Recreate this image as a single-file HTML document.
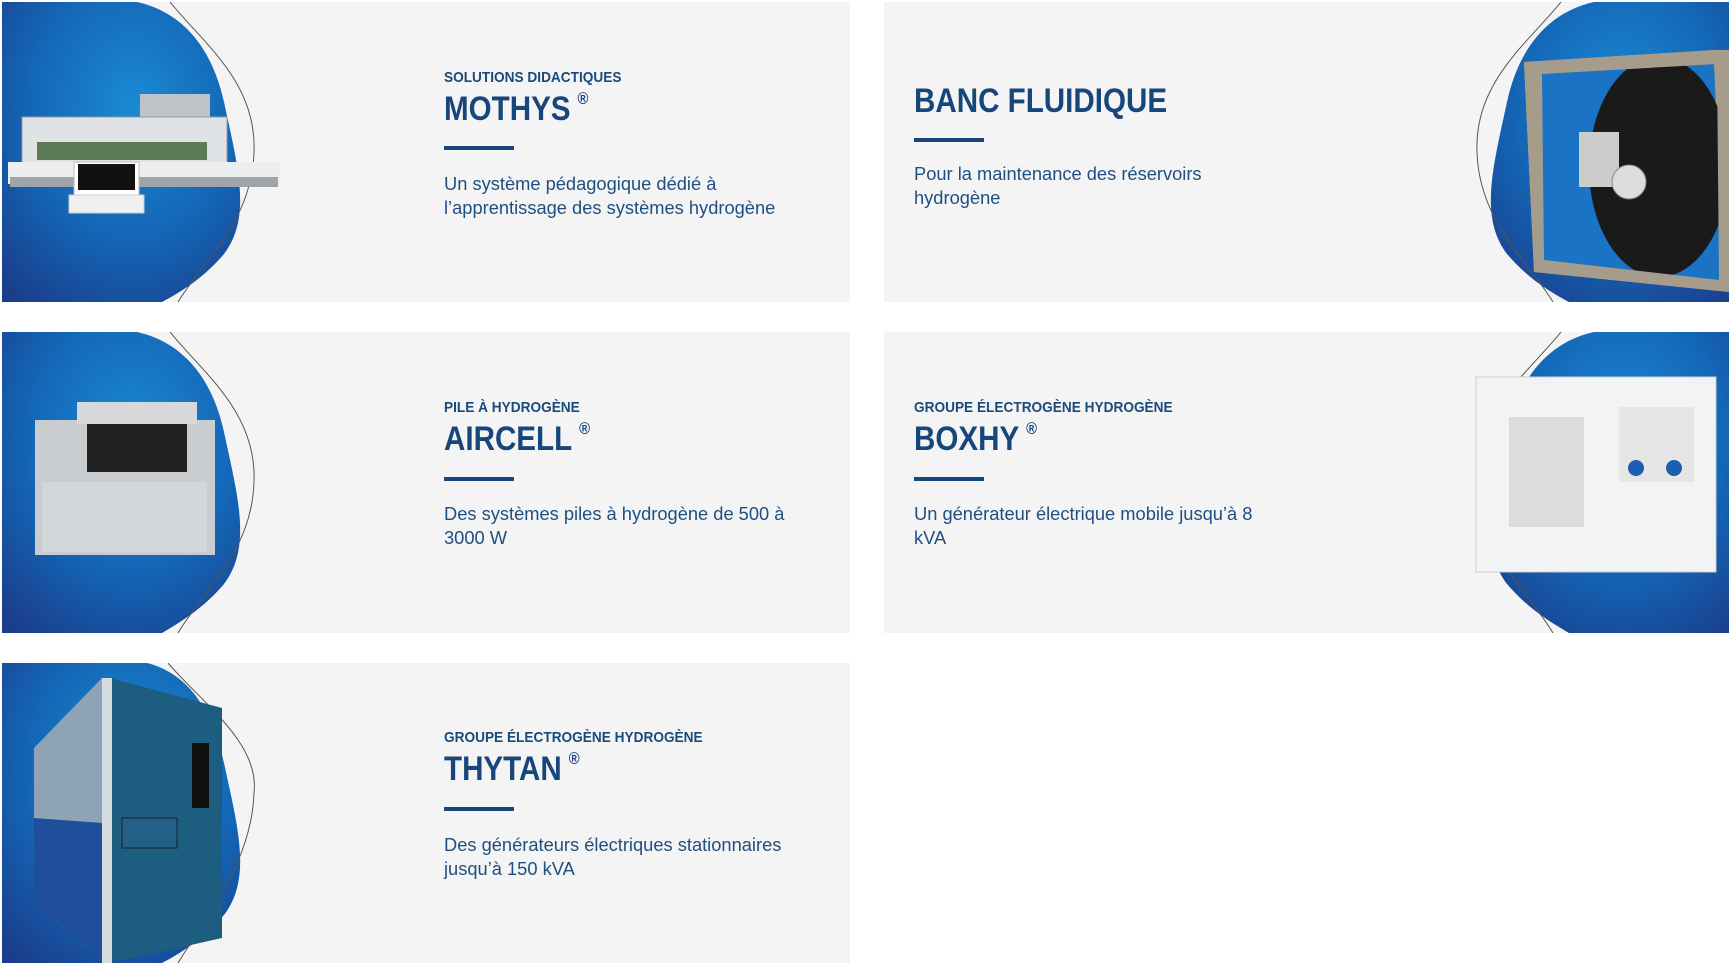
<!DOCTYPE html>
<html><head><meta charset="utf-8"><style>
*{margin:0;padding:0;box-sizing:border-box}
body{width:1729px;height:958px;background:#fff;position:relative;overflow:hidden;font-family:"Liberation Sans",sans-serif;color:#1a4a7c}
.card{position:absolute;background:#f4f4f4;overflow:hidden}
.card svg{position:absolute;left:0;top:0}
.t{position:absolute;white-space:nowrap}
.lab{font-weight:bold;font-size:15px;color:#1a4a7c;line-height:1;transform:scaleX(0.91);transform-origin:left}
.ttl{font-weight:bold;font-size:34px;color:#17467a;line-height:1;transform:scaleX(0.87);transform-origin:left}
.ttl sup{font-size:17px;vertical-align:top;position:relative;top:-2px;margin-left:8px}
.bar{width:70px;height:4px;background:#17467a}
.body{line-height:24px;color:#1f4f80;font-size:18.3px}
</style></head><body>
<svg width="0" height="0" style="position:absolute"><defs>
<radialGradient id="g" cx="0.55" cy="0.35" r="0.8"><stop offset="0" stop-color="#1a8ad4"/><stop offset="0.55" stop-color="#1466b6"/><stop offset="1" stop-color="#1a3e8c"/></radialGradient>
</defs></svg>

<div class="card" style="left:2px;top:2px;width:848px;height:300px">
<svg width="848" height="300"><path d="M0,0 L135,0 C180,10 210,45 222,100 C236,165 250,215 222,252 C200,278 175,292 160,300 L0,300 Z" fill="url(#g)"/>
<path d="M168,0 C200,40 255,80 252,150 C250,220 200,260 176,300" stroke="#555" stroke-width="1" fill="none"/>
<rect x="138" y="92" width="70" height="28" fill="#bfc3c6"/><rect x="20" y="115" width="205" height="50" fill="#dfe3e6" stroke="#999"/>
<rect x="35" y="140" width="170" height="18" fill="#5a7a58"/>
<rect x="6" y="160" width="272" height="22" fill="#eceeef"/><rect x="8" y="175" width="268" height="10" fill="#9ea4a8"/>
<rect x="72" y="160" width="65" height="33" fill="#fff" stroke="#bbb"/><rect x="76" y="162" width="57" height="26" fill="#111"/>
<rect x="67" y="193" width="75" height="18" fill="#f0f0f0" stroke="#ccc"/></svg>
<div class="t lab" style="left:442px;top:68px">SOLUTIONS DIDACTIQUES</div>
<div class="t ttl" style="left:442px;top:90px">MOTHYS<sup>®</sup></div>
<div class="t bar" style="left:442px;top:144px"></div>
<div class="t body" style="left:442px;top:170px">Un système pédagogique dédié à<br>l’apprentissage des systèmes hydrogène</div>
</div>

<div class="card" style="left:884px;top:2px;width:845px;height:300px">
<svg width="845" height="300"><path d="M845,0 L710,0 C665,10 635,45 623,100 C609,165 595,215 623,252 C645,278 670,292 685,300 L845,300 Z" fill="url(#g)"/>
<path d="M677,0 C645,40 590,80 593,150 C595,220 645,260 669,300" stroke="#555" stroke-width="1" fill="none"/>
<path d="M640,60 L830,48 L845,48 L845,290 L650,270 Z" fill="#a59c8c"/>
<path d="M655,72 L830,62 L840,280 L660,258 Z" fill="#1a73c4"/>
<ellipse cx="775" cy="165" rx="70" ry="110" fill="#1a1a1a"/>
<rect x="695" y="130" width="40" height="55" fill="#ccc"/><circle cx="745" cy="180" r="17" fill="#ddd" stroke="#888"/>
<path d="M640,60 L830,48 L845,48 L845,290 L650,270 Z M658,72 L660,258 L835,278 L833,62 Z" fill="#a59c8c" fill-rule="evenodd"/></svg>
<div class="t ttl" style="left:30px;top:82px">BANC FLUIDIQUE</div>
<div class="t bar" style="left:30px;top:136px"></div>
<div class="t body" style="left:30px;top:160px">Pour la maintenance des réservoirs<br>hydrogène</div>
</div>

<div class="card" style="left:2px;top:332px;width:848px;height:301px">
<svg width="848" height="301"><path d="M0,0 L135,0 C180,10 210,45 222,100 C236,165 250,215 222,252 C200,278 175,292 160,301 L0,301 Z" fill="url(#g)"/>
<path d="M168,0 C200,40 255,80 252,150 C250,220 200,260 176,301" stroke="#555" stroke-width="1" fill="none"/>
<rect x="33" y="88" width="180" height="135" fill="#c9cdd0"/><rect x="75" y="70" width="120" height="22" fill="#d8d8d8"/>
<rect x="85" y="92" width="100" height="48" fill="#222"/><rect x="40" y="150" width="165" height="70" fill="#d4d7da"/></svg>
<div class="t lab" style="left:442px;top:68px">PILE À HYDROGÈNE</div>
<div class="t ttl" style="left:442px;top:90px">AIRCELL<sup>®</sup></div>
<div class="t bar" style="left:442px;top:145px"></div>
<div class="t body" style="left:442px;top:170px">Des systèmes piles à hydrogène de 500 à<br>3000 W</div>
</div>

<div class="card" style="left:884px;top:332px;width:845px;height:301px">
<svg width="845" height="301"><path d="M845,0 L710,0 C665,10 635,45 623,100 C609,165 595,215 623,252 C645,278 670,292 685,301 L845,301 Z" fill="url(#g)"/>
<path d="M677,0 C645,40 590,80 593,150 C595,220 645,260 669,301" stroke="#555" stroke-width="1" fill="none"/>
<rect x="592" y="45" width="240" height="195" fill="#f2f3f4" stroke="#ccc"/>
<rect x="625" y="85" width="75" height="110" fill="#dcdcdc"/><rect x="735" y="75" width="75" height="75" fill="#e6e6e6"/>
<circle cx="752" cy="136" r="8" fill="#1a5fb0"/><circle cx="790" cy="136" r="8" fill="#1a5fb0"/></svg>
<div class="t lab" style="left:30px;top:68px">GROUPE ÉLECTROGÈNE HYDROGÈNE</div>
<div class="t ttl" style="left:30px;top:90px">BOXHY<sup>®</sup></div>
<div class="t bar" style="left:30px;top:145px"></div>
<div class="t body" style="left:30px;top:170px">Un générateur électrique mobile jusqu’à 8<br>kVA</div>
</div>

<div class="card" style="left:2px;top:663px;width:848px;height:300px">
<svg width="848" height="300"><path d="M0,0 L145,0 C185,10 210,45 222,100 C236,165 250,215 222,252 C200,278 175,292 160,300 L0,300 Z" fill="url(#g)"/>
<path d="M166,0 C200,40 258,80 252,130 C250,200 200,260 176,300" stroke="#555" stroke-width="1" fill="none"/>
<path d="M32,85 L100,15 L100,295 L32,240 Z" fill="#8fa3b6"/><path d="M32,155 L100,160 L100,295 L32,240 Z" fill="#1f4e9a"/>
<path d="M108,15 L220,45 L220,275 L108,300 Z" fill="#1d5d80"/><rect x="100" y="15" width="10" height="285" fill="#d5dcdf"/>
<rect x="190" y="80" width="17" height="65" fill="#111"/><rect x="120" y="155" width="55" height="30" fill="#245f86" stroke="#123"/></svg>
<div class="t lab" style="left:442px;top:67px">GROUPE ÉLECTROGÈNE HYDROGÈNE</div>
<div class="t ttl" style="left:442px;top:89px">THYTAN<sup>®</sup></div>
<div class="t bar" style="left:442px;top:144px"></div>
<div class="t body" style="left:442px;top:170px">Des générateurs électriques stationnaires<br>jusqu’à 150 kVA</div>
</div>
</body></html>
